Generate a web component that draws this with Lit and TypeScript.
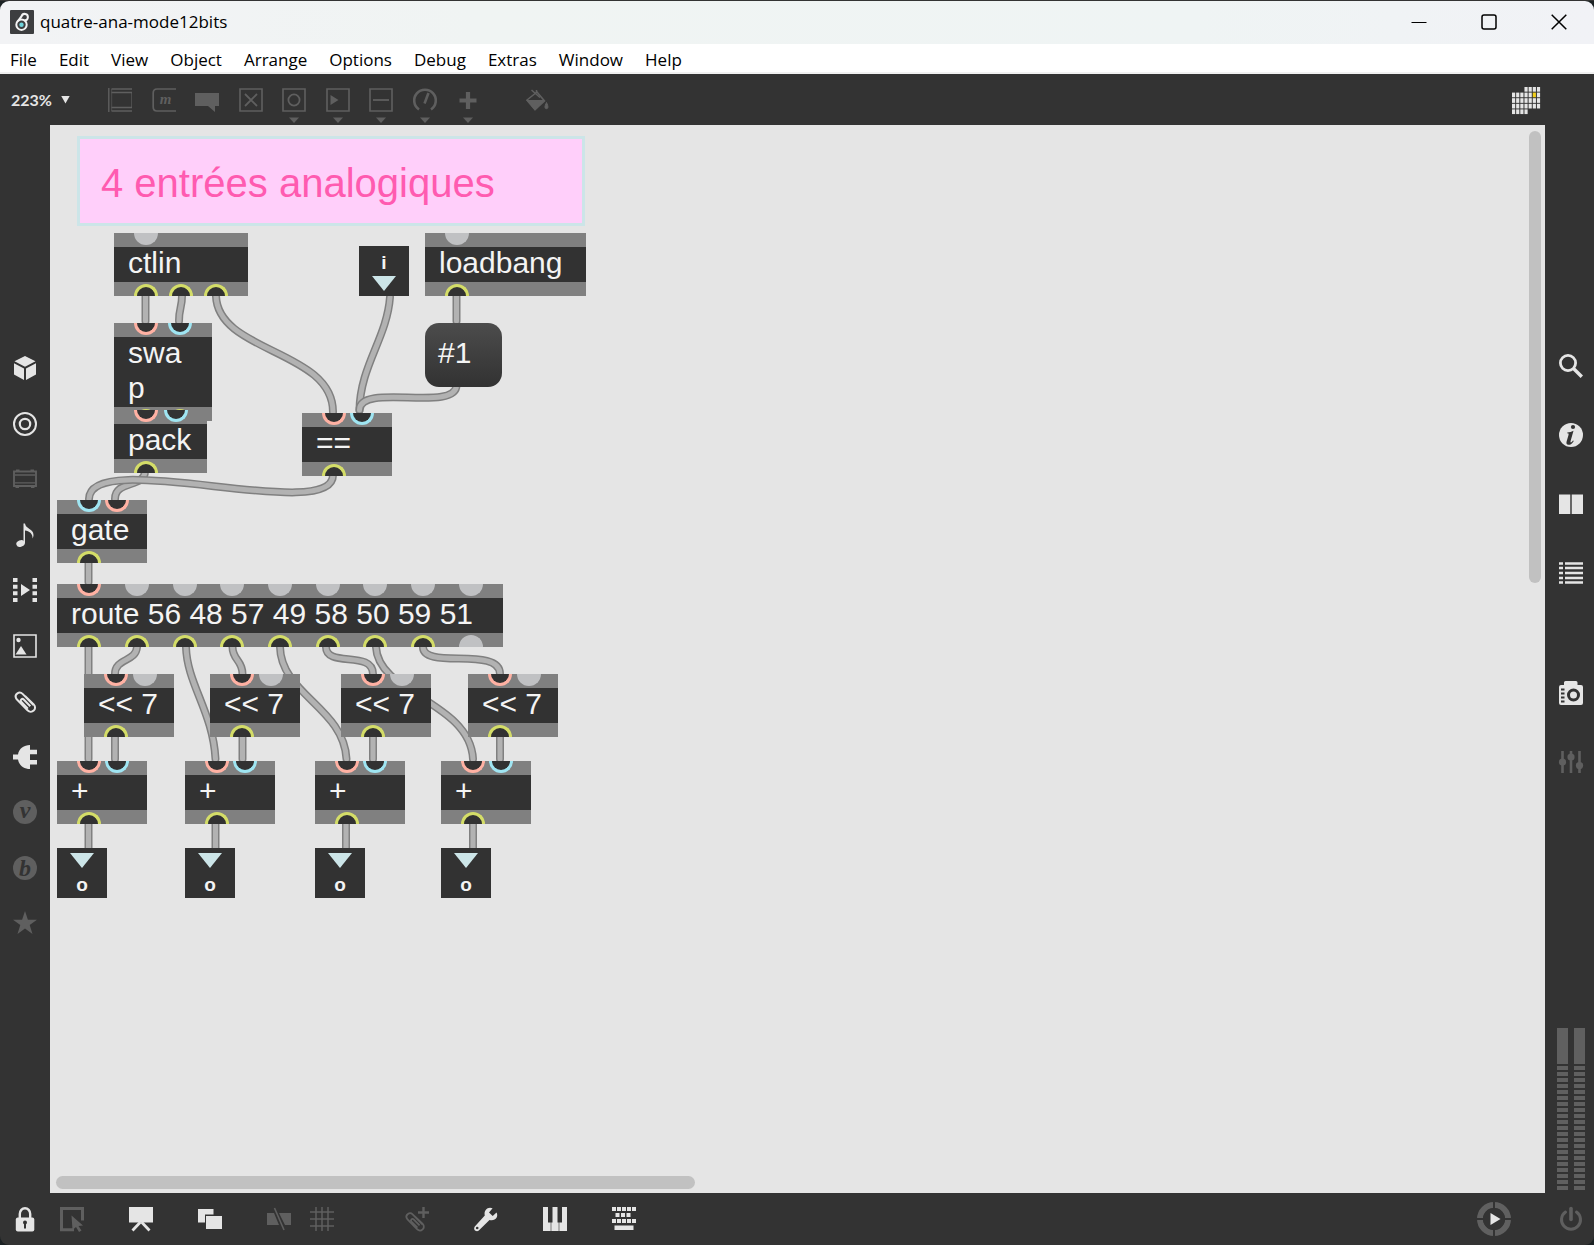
import { LitElement, html, svg, css, nothing } from "lit";
import { customElement, property } from "lit/decorators.js";
import { classMap } from "lit/directives/class-map.js";
import { styleMap } from "lit/directives/style-map.js";

/* ---------- icon set, all on a 24 x 24 grid ---------- */
const down = svg`<path d="M7 29.500h10l-5 5.500z" fill="currentColor"/>`;
const frame = svg`<path d="M1 1h22v22H1z" fill="none" stroke="currentColor" stroke-width="1.6"/>`;
const clip = svg`<path d="M20.500 15.500 9.600 4.400C6.300 1.200 1.200 4.700 3 8.600c.4.900 1 1.500 1.700 2.200l9.800 10c4.200 4.200 10.300-1.600 6.200-5.900L12 6.500" transform="translate(0 .5)"/>
<path d="m17.300 17.200-6.600-6.700c-1.600-1.600-4 .6-2.500 2.300l6.700 6.800" />`;

const ICONS: Record<string, unknown> = {
  object: svg`<path d="M.8 0v24" stroke="currentColor" stroke-width="1.400"/><path d="M3.500 1H24M3.500 4.500H24M3.500 19.500H24M3.500 23H24" stroke="currentColor" stroke-width="1.500"/><path d="M3.700 1v22M23.500 4v16" stroke="currentColor" stroke-width=".6"/>`,
  message: svg`<path d="M24 1H5Q1.200 1 1.200 5v14q0 4 3.800 4h19" stroke="currentColor" stroke-width="1.700" fill="none"/><text x="13.500" y="15.500" text-anchor="middle" font-family="Liberation Serif, serif" font-style="italic" font-weight="700" font-size="15" fill="currentColor">m</text>`,
  comment: svg`<path d="M0 5h24v13h-4v6l-7-6H0z" fill="currentColor"/>`,
  toggle: svg`${frame}<path d="m6 6 12 12M18 6 6 18" stroke="currentColor" stroke-width="1.800"/>`,
  button: svg`${frame}<circle cx="12" cy="12" r="5.600" fill="none" stroke="currentColor" stroke-width="1.800"/>${down}`,
  number: svg`${frame}<path d="M4.500 7v10l8-5z" fill="currentColor"/>${down}`,
  slider: svg`${frame}<path d="M4 12h16" stroke="currentColor" stroke-width="1.800"/>${down}`,
  dial: svg`<path d="M6 21.500A10.800 10.800 0 1 1 18 21.500" fill="none" stroke="currentColor" stroke-width="2.600"/><path d="M11.500 15.500 15.500 5" stroke="currentColor" stroke-width="2.600"/>${down}`,
  plus: svg`<path d="M12 4v17M3.500 12.500h17" stroke="currentColor" stroke-width="4.200"/>${down}`,
  bucket: svg`<path d="m2 12 10-8 7.500 9L10 21.500z" fill="none" stroke="currentColor" stroke-width="1.600"/><path d="M1 12h19L10 22.500z" fill="currentColor"/><path d="M6.500 2 15 9.500M11.500 2v3" stroke="currentColor" stroke-width="1.500"/><path d="M21.500 14.500q3 6-.1 6.200-3-.2.1-6.200z" fill="currentColor" stroke="currentColor"/>`,
  cube: svg`<path d="m12 0 10.500 5.200L12 10.800 1.500 5.200zM1 7.200l10 5.300V24L1 18.500zM23 7.200l-10 5.300V24l10-5.500z" fill="currentColor"/>`,
  target: svg`<circle cx="12" cy="12" r="11" fill="none" stroke="currentColor" stroke-width="2"/><circle cx="12" cy="12" r="5.200" fill="none" stroke="currentColor" stroke-width="2.200"/>`,
  device: svg`<path d="M1 4.500h22v14.500H1z" fill="none" stroke="currentColor" stroke-width="1.900"/><path d="M2 8h20M2 15.800h20" fill="none" stroke="currentColor" stroke-width="1.300"/><path d="M3 2.500h3.500v2H3zM17.500 2.500H21v2h-3.500zM2.500 19h3.500v2H2.500zM18 19h3.500v2H18z" fill="currentColor"/>`,
  note: svg`<ellipse cx="7.500" cy="20.500" rx="4.300" ry="3.300" transform="rotate(-22 7.500 20.500)" fill="currentColor"/><path d="M10.500 20.500V.5h1.500c.5 5.500 8.500 5 8.500 11.500 0 1.500-.5 2.600-1 3.500.5-5-3.500-7.500-7.500-8v13z" fill="currentColor"/>`,
  video: svg`<path d="M0 0h4.500v4H0zM0 6.700h4.500v4H0zM0 13.300h4.500v4H0zM0 20h4.500v4H0zM19.500 0H24v4h-4.500zM19.500 6.700H24v4h-4.500zM19.500 13.300H24v4h-4.500zM19.500 20H24v4h-4.500zM8 6v12l9-6z" fill="currentColor"/>`,
  image: svg`${frame}<circle cx="5.500" cy="6" r="2.200" fill="currentColor"/><path d="M2.500 20.500 8 12l5.500 8.500z" fill="currentColor"/>`,
  clip: svg`<g fill="none" stroke="currentColor" stroke-width="2">${clip}</g>`,
  plug: svg`<path d="M0 9.500h5C6 3.500 11 0 17 0v4.700h7v4.500h-7v5.800h7v4.500h-7V24C11 24 6 20.500 5 14.500H0z" fill="currentColor"/>`,
  vee: svg`<circle cx="12" cy="12" r="12" fill="currentColor"/><text x="12" y="18" text-anchor="middle" font-family="Liberation Serif, serif" font-style="italic" font-weight="700" font-size="24" fill="#333">v</text>`,
  bee: svg`<circle cx="12" cy="12" r="12" fill="currentColor"/><text x="12" y="20" text-anchor="middle" font-family="Liberation Serif, serif" font-style="italic" font-weight="700" font-size="24" fill="#333">b</text>`,
  star: svg`<path d="m12 0 2.900 8.700H24l-7.300 5.400 2.800 8.900-7.500-5.400L4.500 23l2.800-8.900L0 8.700h9.100z" fill="currentColor"/>`,
  search: svg`<circle cx="9" cy="9" r="7.600" fill="none" stroke="currentColor" stroke-width="2.800"/><path d="m14.500 14.500 8.300 8.300" stroke="currentColor" stroke-width="3.400"/>`,
  info: svg`<circle cx="12" cy="12" r="12" fill="currentColor"/><circle cx="14" cy="4" r="2.100" fill="#333"/><path d="M8.300 9.600q3.500-.3 6.200-1.800L11.600 18q-.4 1.600.4 1.400 1-.4 2-2l.8.500c-1.800 3.200-3.800 4.100-5.400 3.900-2-.3-2.200-1.700-1.800-3.300l2-6.800q.4-1.600-1.400-1.300z" fill="#333"/>`,
  columns: svg`<path d="M0 2.500h11.300v19.500H0zM12.700 2.500H24v19.500H12.700z" fill="currentColor"/>`,
  list: svg`<path d="M0 2.500h4M6 2.500h18M0 7h4M6 7h18M0 12h4M6 12h18M0 17h4M6 17h18M0 21.500h4M6 21.500h18" stroke="currentColor" stroke-width="2.300"/>`,
  camera: svg`<path d="M5 4V1.500Q5 0 6.500 0h10.500q1.500 0 1.500 1.500V4H22q2 0 2 2v16q0 2-2 2H2q-2 0-2-2V6q0-2 2-2z" fill="currentColor"/><circle cx="14.500" cy="14" r="5" fill="none" stroke="#333" stroke-width="3"/><path d="M2 8.500h3.500M2 12.500h3.500M2 16.500h3.500M2 20.500h3.500" stroke="#333" stroke-width="1.800"/>`,
  sliders: svg`<path d="M3.500 1v22M12 1v22M20.500 1v22" stroke="currentColor" stroke-width="2.600"/><circle cx="3.500" cy="12" r="3.600" fill="currentColor"/><circle cx="12" cy="7" r="3.600" fill="currentColor"/><circle cx="20.500" cy="15.500" r="3.600" fill="currentColor"/>`,
  lock: svg`<path d="M6.800 12V7a5.200 5.800 0 0 1 10.400 0v5" fill="none" stroke="currentColor" stroke-width="2.400"/><rect x="2.800" y="10.500" width="18.500" height="14" rx="2" fill="currentColor"/><circle cx="12" cy="15.500" r="2" fill="#333"/><path d="M11 16h2v5.500h-2z" fill="#333"/>`,
  select: svg`<path d="M14 22.800H1.500V1.500h21v12" fill="none" stroke="currentColor" stroke-width="3"/><path d="m11.500 8.500 11.500 10-4.500.5 3 4.500-2.500 1.500-3-5-3.500 3z" fill="currentColor"/>`,
  present: svg`<path d="M0 0h24v15.500H0z" fill="currentColor"/><path d="m11.500 15-8 8.500M12.500 15l8 8.500" stroke="currentColor" stroke-width="2.800"/>`,
  layers: svg`<path d="M0 2h15.500v5.500H7v8H0z" fill="currentColor"/><path d="M8 9h16v13H8z" fill="currentColor"/>`,
  mute: svg`<path d="M0 6h7l5 12H0zM12 6h12v12h-6z" fill="currentColor"/><path d="m7.500 1 9.500 22" stroke="currentColor" stroke-width="1.600"/>`,
  grid: svg`<path d="M6 0v24M12 0v24M18 0v24M0 5h24M0 12h24M0 19h24" stroke="currentColor" stroke-width="1.500"/>`,
  clipadd: svg`<g fill="none" stroke="currentColor" stroke-width="2" transform="translate(-1 3) scale(.9)">${clip}</g><path d="M18.500 0v11M13 5.500h11" stroke="currentColor" stroke-width="2.400"/>`,
  wrench: svg`<path d="M22.500 5.500 18.700 9 15 5.400 18.600 1.300C14.500-.8 9.500 2.500 10.800 8.500L.8 19.500c-2.200 3.600 1.800 5.800 4 4L15.500 13c6 1.500 9.300-3.500 7-7.500z" fill="currentColor"/><circle cx="3.200" cy="21" r="1.300" fill="#333"/>`,
  piano: svg`<path d="M0 0h5v15.500h2.700V24H0zM9.500 0h5v15.500h1.200V24H8.300V15.500h1.200zM19 0h5v24h-7.700V15.500H19z" fill="currentColor"/>`,
  keys: svg`<path d="M0 0h4v4H0zM5 0h4v4H5zM10 0h4v4h-4zM15 0h4v4h-4zM20 0h4v4h-4zM3.500 6h4v4h-4zM9 6h4v4H9zM14.500 6h4v4h-4zM0 12h4v4H0zM5 12h4v4H5zM10 12h4v4h-4zM15 12h4v4h-4zM20 12h4v4h-4zM2.500 18.500h19v4.500h-19z" fill="currentColor"/>`,
  power: svg`<path d="M6.500 5a9.500 9.500 0 1 0 11 0" fill="none" stroke="currentColor" stroke-width="3" stroke-linecap="round"/><path d="M12 1.500v11" stroke="currentColor" stroke-width="3.600" stroke-linecap="round"/>`,
};

@customElement("max-icon")
class MaxIcon extends LitElement {
  @property() name = "";
  static styles = css`
    :host { display: block; width: 24px; height: 24px; }
    .glyph { display: block; width: 24px; height: 24px; overflow: visible; }
  `;
  render() {
    return html`<svg class="glyph" viewBox="0 0 24 24" aria-hidden="true">${ICONS[this.name] ?? nothing}</svg>`;
  }
}

/* ---------- patcher data, in patch units ---------- */
type Port = [x: number, kind: "hot" | "cold" | "idle" | "out"];
interface Box { x: number; y: number; w: number; text: string; ins: Port[]; outs: Port[]; }

const ORIGIN = { x: 50, y: 125 };
const routeX = [89, 137, 185, 232, 280, 328, 375, 423, 471];

const shift = (x: number, w: number): Box => ({
  x, y: 674, w, text: "<< 7", ins: [[x + 32, "hot"], [x + 61, "idle"]], outs: [[x + 32, "out"]],
});
const add = (x: number): Box => ({
  x, y: 761, w: 90, text: "+", ins: [[x + 32, "hot"], [x + 60, "cold"]], outs: [[x + 32, "out"]],
});

const BOXES: Box[] = [
  { x: 114, y: 233, w: 134, text: "ctlin", ins: [[146, "idle"]], outs: [[146, "out"], [181, "out"], [216, "out"]] },
  { x: 425, y: 233, w: 161, text: "loadbang", ins: [[457, "idle"]], outs: [[457, "out"]] },
  { x: 114, y: 323, w: 98, text: "swa\np", ins: [[146, "hot"], [180, "cold"]], outs: [[146, "out"], [180, "out"]] },
  { x: 114, y: 410, w: 93, text: "pack", ins: [[146, "hot"], [176, "cold"]], outs: [[146, "out"]] },
  { x: 302, y: 413, w: 90, text: "==", ins: [[334, "hot"], [362, "cold"]], outs: [[334, "out"]] },
  { x: 57, y: 500, w: 90, text: "gate", ins: [[89, "cold"], [117, "hot"]], outs: [[89, "out"]] },
  {
    x: 57, y: 584, w: 446, text: "route 56 48 57 49 58 50 59 51",
    ins: routeX.map((x, i): Port => [x, i ? "idle" : "hot"]),
    outs: routeX.map((x, i): Port => [x, i < 8 ? "out" : "idle"]),
  },
  shift(84, 90), shift(210, 90), shift(341, 90), shift(468, 90),
  add(57), add(185), add(315), add(441),
];

const CORDS = [
  "M145.500 296V321", "M182 296C182 308 179 308 179 321", "M216 296C218 353 333 350 333 412",
  "M390 297C387 338 360 366 359.500 410", "M456.500 296V321", "M456.500 385C456.500 413 359.500 382 359.500 410",
  "M145 471C145 488 115 480 115 499", "M333 475C333 525 89 446 89 499",
  "M88.500 563V582", "M88.500 647V759", "M137 647C136 662 115 658 115 674", "M186 647C187 684 213 712 215.500 759",
  "M232.500 647C232.500 660 242.500 660 242.500 674", "M280 647C281 694 344 708 346.500 759",
  "M326 647C326 668 373 650 373 674", "M376 647C378 694 470 702 473 759",
  "M423 647C423 670 500 646 500 674",
  "M115 737V759", "M242.500 737V759", "M373 737V759", "M500 737V759",
  "M88.500 824V848", "M215.500 824V848", "M346 824V848", "M473 824V848",
];

const at = (x: number, y: number, w?: number) =>
  styleMap({ left: `${x - ORIGIN.x}px`, top: `${y - ORIGIN.y}px`, ...(w ? { width: `${w}px` } : {}) });

@customElement("max-patcher")
class MaxPatcher extends LitElement {
  static styles = css`
    :host { display: block; position: relative; font-family: "Liberation Sans", Arial, sans-serif; overflow: hidden; }
    .cords { position: absolute; left: 0; top: 0; width: 640px; height: 800px; fill: none; stroke-linecap: round; }
    .edge { stroke: #808080; stroke-width: 8px; }
    .core { stroke: #b2b2b2; stroke-width: 5px; }
    .box { position: absolute; background: #323232; color: #f4f4f4; }
    .bar { position: relative; height: 14px; background: #808080; overflow: hidden; }
    .label { margin: -2px 0 0; padding: 0 14px 2px; font-size: 30px; line-height: 35px; white-space: pre; }
    .port { position: absolute; width: 24px; height: 12px; box-sizing: border-box; background: #323232; transform: translateX(-12px); }
    .in { top: 0; border-radius: 0 0 12px 12px; border: 3px solid; border-top: 0; }
    .outlet { bottom: 0; border-radius: 12px 12px 0 0; border: 3px solid; border-bottom: 0; }
    .hot { border-color: #ffb1a3; }
    .cold { border-color: #9fe5f2; }
    .out { border-color: #d4dd68; }
    .idle { background: #c0c1c3; border-color: #c0c1c3; }
    .comment { position: absolute; box-sizing: border-box; background: #ffcffa; border: 3px solid #cce5e8; padding: 23px 21px 19px; color: #ff5bb0; font-size: 40px; line-height: 42px; white-space: nowrap; }
    .msg { position: absolute; box-sizing: border-box; border: 0; border-radius: 14px; background: linear-gradient(#4c4c4c, #323232); color: #f4f4f4; font: inherit; font-size: 30px; line-height: 35px; text-align: left; padding: 12px 13px 17px; }
    .io { position: absolute; width: 50px; height: 50px; box-sizing: border-box; display: flex; flex-direction: column; align-items: center; background: #323232; color: #f4f4f4; font-size: 19px; line-height: 20px; font-weight: 700; padding: 7px 0 5px; gap: 3px; }
    .io.up { padding: 5px 0 0; gap: 7px; }
    .tri { width: 24px; height: 15px; background: #cce5e8; clip-path: polygon(0 0, 100% 0, 50% 100%); }
  `;

  port([x, kind]: Port, box: Box, side: string) {
    return html`<span class=${classMap({ port: true, [side]: true, [kind]: true })}
      style=${styleMap({ left: `${x - box.x}px` })}></span>`;
  }

  render() {
    return html`
      <svg class="cords" viewBox="50 125 640 800" aria-hidden="true">
        ${CORDS.map((d) => svg`<path class="edge" d=${d}/><path class="core" d=${d}/>`)}
      </svg>
      <div class="comment" style=${at(77, 136, 508)}>4 entrées analogiques</div>
      ${BOXES.map((b) => html`
        <div class="box" style=${at(b.x, b.y, b.w)}>
          <div class="bar">${b.ins.map((p) => this.port(p, b, "in"))}</div>
          <p class="label">${b.text}</p>
          <div class="bar">${b.outs.map((p) => this.port(p, b, "outlet"))}</div>
        </div>`)}
      <button class="msg" style=${at(425, 323, 77)}>#1</button>
      <div class="io" style=${at(359, 246)}>i<span class="tri"></span></div>
      ${[57, 185, 315, 441].map((x) => html`<div class="io up" style=${at(x, 848)}><span class="tri"></span>o</div>`)}
    `;
  }
}

/* ---------- window ---------- */
const MENUS = ["File", "Edit", "View", "Object", "Arrange", "Options", "Debug", "Extras", "Window", "Help"];
const PALETTE = ["object", "message", "comment", "toggle", "button", "number", "slider", "dial", "plus"];
const LEFT: [string, boolean][] = [
  ["cube", true], ["target", true], ["device", false], ["note", true], ["video", true], ["image", true],
  ["clip", true], ["plug", true], ["vee", false], ["bee", false], ["star", false],
];

@customElement("app-root")
class AppRoot extends LitElement {
  static styles = css`
    :host { display: block; background: #1c2224; font-family: "Open Sans", "Segoe UI", sans-serif; color: #000; }
    .window { display: flex; flex-direction: column; min-height: 100vh; box-sizing: border-box; border-top: 1px solid #333; }
    button { appearance: none; border: 0; margin: 0; padding: 0; background: none; font: inherit; color: inherit; }
    .title { display: flex; align-items: center; height: 43px; box-sizing: border-box; background: linear-gradient(90deg, #f2f3f5, #f0f4f3 30%, #eff4f4 75%, #f1f2f6); border-radius: 9px 9px 0 0; padding: 0 0 2px 10px; }
    .logo { width: 24px; height: 24px; }
    .name { flex: 1; margin: 0; padding-left: 6px; font-size: 17px; font-weight: 400; line-height: 24px; }
    .ctl { display: grid; place-items: center; width: 70px; height: 41px; }
    .ctl svg { width: 16px; height: 16px; fill: none; stroke: #000; }
    .menus { display: flex; align-items: center; gap: 22px; height: 30px; box-sizing: border-box; padding: 3px 10px 0; background: #fff; border-bottom: 2px solid #f0f0f0; font-size: 17px; line-height: 24px; }
    .tools { display: flex; align-items: center; height: 51px; background: #333; color: #5f5f5f; }
    .zoom { display: flex; align-items: center; gap: 9px; width: 108px; padding-left: 11px; box-sizing: border-box; color: #e5e5e5; font-family: Lato, sans-serif; font-weight: 700; font-size: 16px; line-height: 20px; }
    .caret { width: 9px; height: 8px; background: #e5e5e5; clip-path: polygon(0 0, 100% 0, 50% 100%); }
    .palette { display: flex; justify-content: space-between; width: 372px; margin-right: 45px; }
    .cal { width: 30px; height: 30px; margin-left: auto; margin-right: 53px; padding-top: 2px; }
    .middle { flex: 1; display: grid; grid-template-columns: 50px 1fr 49px; background: #333; }
    .side { display: flex; flex-direction: column; align-items: center; color: #e5e5e5; }
    .objects { display: flex; flex-direction: column; justify-content: space-between; min-height: 579px; margin-top: 231px; margin-right: 1px; }
    .dim { color: #5f5f5f; }
    .work { display: grid; grid-template: 1fr 18px / 1fr 16px; background: #e5e5e5; }
    .vbar { width: 12px; height: 43%; margin-top: 6px; border-radius: 6px; background: #c1c1c1; }
    .hbar { width: 43.2%; height: 13px; margin-left: 6px; margin-top: 1px; border-radius: 7px; background: #c1c1c1; }
    .panels { display: flex; flex-direction: column; gap: 45px; margin-top: 229px; margin-left: 3px; }
    .far { display: grid; margin-top: 51px; }
    .meter { display: flex; gap: 6px; margin-top: auto; padding: 0 0 3px 3px; }
    .level { display: flex; flex-direction: column; gap: 2px; width: 11px; }
    .peak { height: 36px; background: #606060; }
    .step { height: 4px; background: #606060; }
    .bottom { display: flex; align-items: center; height: 52px; box-sizing: border-box; padding: 0 11px 1px 13px; background: #333; color: #e5e5e5; border-radius: 0 0 9px 9px; gap: 45px; }
    .pair { display: flex; gap: 23px; }
    .pair.close { gap: 19px; }
    .wide { display: grid; margin-left: 26px; }
    .run { margin-left: auto; margin-right: 3px; width: 34px; height: 34px; }
    .run svg, .cal svg, .logo svg { display: block; width: 100%; height: 100%; overflow: visible; }
  `;

  tool(name: string, dim = false) {
    return html`<button class=${classMap({ dim })} aria-label=${name}><max-icon name=${name}></max-icon></button>`;
  }

  calendar() {
    const cells = [];
    for (let r = 0; r < 5; r++)
      for (let c = 0; c < 7; c++) {
        if ((r === 0 && c < 3) || (r === 4 && c > 3)) continue;
        cells.push(svg`<rect x=${c * 4.45} y=${r * 6} width="3.400" height="5" fill=${r === 1 && c === 5 ? "#f2cf1b" : "#e5e5e5"}/>`);
      }
    return html`<svg viewBox="0 0 30 30">${cells}</svg>`;
  }

  render() {
    return html`<div class="window">
      <header class="title">
        <span class="logo"><svg viewBox="0 0 24 24"><rect width="24" height="24" rx="1" fill="#3d3e40"/>
          <circle cx="11.500" cy="14.700" r="5.200" fill="none" stroke="#f4f4f4" stroke-width="2"/><circle cx="11.500" cy="14.700" r="2.200" fill="#6fd3dc"/>
          <path d="M8 11.200 11.600 6.200A3.200 3.200 0 1 1 14.500 10.300" fill="none" stroke="#f4f4f4" stroke-width="2"/></svg></span>
        <h1 class="name">quatre-ana-mode12bits</h1>
        <button class="ctl" aria-label="Minimize"><svg viewBox="0 0 16 16"><path d="M.5 8.500h15"/></svg></button>
        <button class="ctl" aria-label="Maximize"><svg viewBox="0 0 16 16"><rect x="1" y="1" width="14" height="14" rx="2" stroke-width="1.500"/></svg></button>
        <button class="ctl" aria-label="Close"><svg viewBox="0 0 16 16"><path d="m.7.7 14.600 14.600M15.300.7.7 15.300" stroke-width="1.500"/></svg></button>
      </header>
      <nav class="menus">${MENUS.map((m) => html`<button>${m}</button>`)}</nav>
      <div class="tools">
        <button class="zoom">223%<span class="caret"></span></button>
        <div class="palette">${PALETTE.map((n) => this.tool(n, true))}</div>
        ${this.tool("bucket", true)}
        <button class="cal" aria-label="Calendar">${this.calendar()}</button>
      </div>
      <main class="middle">
        <aside class="side"><div class="objects">${LEFT.map(([n, on]) => this.tool(n, !on))}</div></aside>
        <section class="work">
          <max-patcher></max-patcher>
          <div><div class="vbar"></div></div>
          <div><div class="hbar"></div></div>
        </section>
        <aside class="side">
          <div class="panels">
            ${["search", "info", "columns", "list"].map((n) => this.tool(n))}
            <div class="far">${this.tool("camera")}</div>
            ${this.tool("sliders", true)}
          </div>
          <div class="meter">${[0, 1].map(() => html`<div class="level"><div class="peak"></div>
            ${Array.from({ length: 21 }, () => html`<div class="step"></div>`)}</div>`)}</div>
        </aside>
      </main>
      <footer class="bottom">
        <div class="pair">${this.tool("lock")}${this.tool("select", true)}</div>
        ${this.tool("present")}${this.tool("layers")}
        <div class="pair close">${this.tool("mute", true)}${this.tool("grid", true)}</div>
        <div class="wide">${this.tool("clipadd", true)}</div>
        ${this.tool("wrench")}${this.tool("piano")}${this.tool("keys")}
        <button class="run" aria-label="Run"><svg viewBox="0 0 34 34"><circle cx="17" cy="17" r="14" fill="none" stroke="#606060" stroke-width="6"/>
          <path d="M17 0v34M0 17h34" stroke="#333" stroke-width="2"/><circle cx="17" cy="17" r="11" fill="#333"/><path d="M13.500 11v12l10-6z" fill="#e5e5e5"/></svg></button>
        ${this.tool("power", true)}
      </footer>
    </div>`;
  }
}
